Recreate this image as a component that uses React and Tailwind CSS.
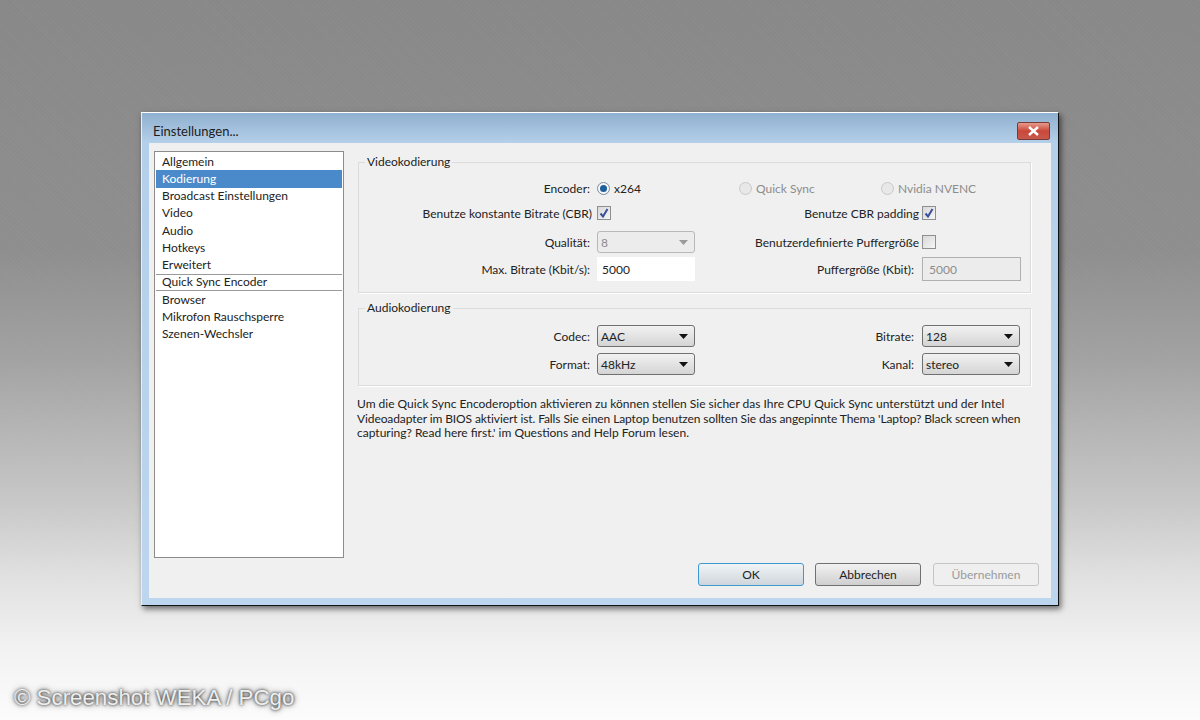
import React from 'react';

const menuItems = [
  'Allgemein',
  'Kodierung',
  'Broadcast Einstellungen',
  'Video',
  'Audio',
  'Hotkeys',
  'Erweitert',
  'Quick Sync Encoder',
  'Browser',
  'Mikrofon Rauschsperre',
  'Szenen-Wechsler',
];

const Radio = ({ checked, disabled }) => (
  <span className={`flex h-[13px] w-[13px] shrink-0 items-center justify-center rounded-full border ${disabled ? 'border-[#c8c8c8] bg-[#e8e8e8]' : 'border-[#7f8a99] bg-[#f4f6f8]'}`}>
    {checked && <span className="h-[7px] w-[7px] rounded-full bg-[#1c5f9c]" />}
  </span>
);

const Checkbox = ({ checked }) => (
  <span className="flex h-[14px] w-[14px] shrink-0 items-center justify-center border border-[#8e8f8f] bg-gradient-to-br from-[#d8d8d8] to-[#f6f6f6]">
    {checked && (
      <svg width="10" height="10" viewBox="0 0 10 10" fill="none">
        <path d="M1.5 5.5 L4 8.5 L8.5 1" stroke="#3a4f9a" strokeWidth="2" />
      </svg>
    )}
  </span>
);

const Select = ({ value, disabled }) => (
  <div className={`flex h-[22px] w-[98px] items-center justify-between rounded-[3px] border pl-[3px] pr-[6px] ${disabled ? 'border-[#b8b8b8] bg-[#ececec] text-[#8c8c8c]' : 'border-[#707070] bg-gradient-to-b from-[#f2f2f2] to-[#d4d4d4] text-[#222]'}`}>
    <span>{value}</span>
    <svg width="9" height="5" viewBox="0 0 9 5">
      <path d="M0 0 H9 L4.5 5 Z" fill={disabled ? '#9a9a9a' : '#111'} />
    </svg>
  </div>
);

const Field = ({ children, className }) => (
  <div className={`flex h-[24px] items-center text-[#222] ${className}`}>{children}</div>
);

const GroupBox = ({ title, children, className }) => (
  <fieldset className={`border border-[#dcdcdc] shadow-[1px_1px_0_#fff] ${className}`}>
    <legend className="ml-[6px] px-[2px] leading-[14px] text-[#222]">{title}</legend>
    {children}
  </fieldset>
);

const Button = ({ children, variant, className = '' }) => {
  const styles = {
    primary: 'border-[#3c9ad0] bg-gradient-to-b from-[#f0f4f7] to-[#cfd6db] text-[#222]',
    normal: 'border-[#707070] bg-gradient-to-b from-[#f2f2f2] to-[#cfcfcf] text-[#222]',
    disabled: 'border-[#c4c4c4] bg-[#efefef] text-[#9a9a9a]',
  };
  return (
    <div className={`flex h-[23px] w-[106px] items-center justify-center rounded-[3px] border ${styles[variant]} ${className}`}>
      {children}
    </div>
  );
};

export default function App() {
  return (
    <div className="relative flex h-[720px] w-[1200px] flex-col items-start overflow-hidden bg-[repeating-linear-gradient(45deg,rgba(255,255,255,0.025)_0px,rgba(255,255,255,0.025)_1px,transparent_1px,transparent_3px),linear-gradient(to_bottom,#888888_0%,#8e8e8e_35%,#a2a2a2_50%,#c8c8c8_70%,#e0e0e0_80%,#f2f2f2_90%,#fcfcfc_100%)] pl-[141px] pt-[112px] font-['Lato',sans-serif] text-[12px] leading-[17px]">
      {/* Window */}
      <div className="flex h-[494px] w-[918px] flex-col border border-b-[#111] border-l-[#e8eef4] border-r-[#111] border-t-white bg-gradient-to-b from-[#8fb0cf] from-[0%] via-[#b4cfe9] via-[6%] to-[#bcd6ef] px-[7px] pb-[7px] shadow-[2px_3px_6px_rgba(0,0,0,0.55)]">
        <div className="flex h-[30px] shrink-0 items-center justify-between">
          <span className="pl-[4px] pt-[6px] text-[13px] text-[#1c1c1c]">Einstellungen...</span>
          <div className="mr-px mt-[5px] flex h-[18px] w-[33px] items-center justify-center rounded-[2px] border border-[#7a3b36] bg-gradient-to-b from-[#e59a8d] via-[#c9473a] to-[#c8584c]">
            <svg width="13" height="10" viewBox="0 0 13 10">
              <path d="M2 1 L11 9 M11 1 L2 9" stroke="#fff" strokeWidth="2.4" />
            </svg>
          </div>
        </div>

        <div className="flex min-h-0 flex-1 flex-col bg-[#f0f0f0] px-[5px] pt-[8px]">
          <div className="flex min-h-0 flex-1 gap-[14px]">
            {/* Sidebar list */}
            <div className="h-[407px] w-[190px] shrink-0 border border-[#8c8c8c] bg-white pl-px pr-px pt-px text-[#222]">
              {menuItems.map((item) => (
                <div
                  key={item}
                  className={`flex h-[17.25px] items-center px-[6px] pb-px ${item === 'Kodierung' ? 'bg-[#4a8acb] text-white' : ''} ${item === 'Quick Sync Encoder' ? 'border-y border-[#9a9a9a]' : ''}`}
                >
                  {item}
                </div>
              ))}
            </div>

            <div className="w-[673px] shrink-0">
              <GroupBox title="Videokodierung" className="mt-[4px] h-[138px]">
                <div className="grid grid-cols-[238px_98px_227px_99px] pt-[7px]">
                  <Field className="justify-end pr-[7px]">Encoder:</Field>
                  <Field className="col-span-3 gap-[4px]">
                    <Radio checked />
                    <span className="w-[121px]">x264</span>
                    <span className="flex items-center gap-[4px] text-[#8c8c8c]">
                      <Radio disabled />
                      <span className="w-[121px]">Quick Sync</span>
                    </span>
                    <span className="flex items-center gap-[4px] text-[#8c8c8c]">
                      <Radio disabled />
                      Nvidia NVENC
                    </span>
                  </Field>

                  <Field className="mt-px justify-end pr-[5px]">Benutze konstante Bitrate (CBR)</Field>
                  <Field className="mt-px"><Checkbox checked /></Field>
                  <Field className="mt-px justify-end pr-[3px]">Benutze CBR padding</Field>
                  <Field className="mt-px"><Checkbox checked /></Field>

                  <Field className="mt-[5px] justify-end pr-[7px]">Qualität:</Field>
                  <Field className="mt-[5px]"><Select value="8" disabled /></Field>
                  <Field className="mt-[5px] justify-end pr-[3px]">Benutzerdefinierte Puffergröße</Field>
                  <Field className="mt-[5px]"><Checkbox /></Field>

                  <Field className="mt-[3px] justify-end pr-[7px]">Max. Bitrate (Kbit/s):</Field>
                  <Field className="mt-[3px]">
                    <div className="flex h-[24px] w-full items-center bg-white pl-[5px]">5000</div>
                  </Field>
                  <Field className="mt-[3px] justify-end pr-[8px]">Puffergröße (Kbit):</Field>
                  <Field className="mt-[3px]">
                    <div className="flex h-[24px] w-full items-center border border-[#b0b0b0] bg-[#ececec] pl-[6px] text-[#8c8c8c]">5000</div>
                  </Field>
                </div>
              </GroupBox>

              <GroupBox title="Audiokodierung" className="mt-[8px] h-[85px]">
                <div className="grid grid-cols-[238px_98px_227px_99px] pt-[9px]">
                  <Field className="justify-end pr-[7px]">Codec:</Field>
                  <Field><Select value="AAC" /></Field>
                  <Field className="justify-end pr-[8px]">Bitrate:</Field>
                  <Field><Select value="128" /></Field>

                  <Field className="mt-[4px] justify-end pr-[7px]">Format:</Field>
                  <Field className="mt-[4px]"><Select value="48kHz" /></Field>
                  <Field className="mt-[4px] justify-end pr-[8px]">Kanal:</Field>
                  <Field className="mt-[4px]"><Select value="stereo" /></Field>
                </div>
              </GroupBox>

              <p className="-ml-px mt-[11px] whitespace-nowrap leading-[14.5px] text-[#222]">
                Um die Quick Sync Encoderoption aktivieren zu können stellen Sie sicher das Ihre CPU Quick Sync unterstützt und der Intel
                <br />
                <span className="tracking-[-0.1px]">Videoadapter im BIOS aktiviert ist. Falls Sie einen Laptop benutzen sollten Sie das angepinnte Thema 'Laptop? Black screen when</span>
                <br />
                capturing? Read here first.' im Questions and Help Forum lesen.
              </p>
            </div>
          </div>

          <div className="flex justify-end gap-[11px] pb-[12px] pr-[7px]">
            <Button variant="primary">OK</Button>
            <Button variant="normal" className="mr-px">Abbrechen</Button>
            <Button variant="disabled">Übernehmen</Button>
          </div>
        </div>
      </div>

      {/* Watermark */}
      <div className="absolute bottom-[5px] left-[14px] font-['Liberation_Sans',sans-serif] text-[22.3px] leading-[34px] text-[#eeeeee] [text-shadow:0_0_3px_#222,0_0_6px_#555]">
        © Screenshot WEKA / PCgo
      </div>
    </div>
  );
}
